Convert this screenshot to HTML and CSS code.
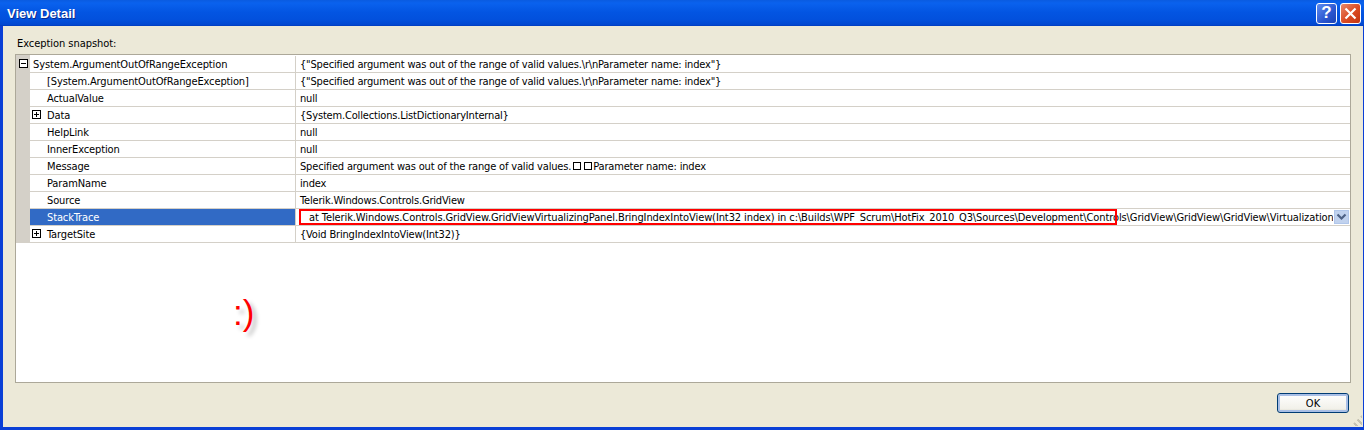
FILE: index.html
```html
<!DOCTYPE html>
<html lang="en">
<head>
<meta charset="utf-8">
<title>View Detail</title>
<link rel="stylesheet" href="styles.css">
</head>
<body>
<div class="window">
  <header class="titlebar">
    <span class="title">View Detail</span>
    <div class="caption-buttons">
      <span class="cap-btn help">?</span>
      <span class="cap-btn close"><svg width="13" height="13" viewBox="0 0 13 13"><path d="M1.5 1.5L11.5 11.5M11.5 1.5L1.5 11.5" stroke="#fff" stroke-width="2.2" fill="none"/></svg></span>
    </div>
  </header>
  <main class="client">
    <div class="caption">Exception snapshot:</div>
    <section class="panel">
      <div class="grid">
        <div class="row">
          <div class="gutter"><svg class="exp" width="9" height="9" viewBox="0 0 9 9"><path d="M.5.5h8v8h-8zM2 4.5h5" stroke="#000" fill="#fff" shape-rendering="crispEdges"/></svg></div>
          <div class="name root">System.ArgumentOutOfRangeException</div>
          <div class="value">{"Specified argument was out of the range of valid values.\r\nParameter name: index"}</div>
        </div>
        <div class="row">
          <div class="gutter"></div>
          <div class="name">[System.ArgumentOutOfRangeException]</div>
          <div class="value">{"Specified argument was out of the range of valid values.\r\nParameter name: index"}</div>
        </div>
        <div class="row">
          <div class="gutter"></div>
          <div class="name">ActualValue</div>
          <div class="value">null</div>
        </div>
        <div class="row">
          <div class="gutter"></div>
          <div class="name"><svg class="exp child" width="9" height="9" viewBox="0 0 9 9"><path d="M.5.5h8v8h-8zM2 4.5h5M4.5 2v5" stroke="#000" fill="#fff" shape-rendering="crispEdges"/></svg>Data</div>
          <div class="value">{System.Collections.ListDictionaryInternal}</div>
        </div>
        <div class="row">
          <div class="gutter"></div>
          <div class="name">HelpLink</div>
          <div class="value">null</div>
        </div>
        <div class="row">
          <div class="gutter"></div>
          <div class="name">InnerException</div>
          <div class="value">null</div>
        </div>
        <div class="row">
          <div class="gutter"></div>
          <div class="name">Message</div>
          <div class="value">Specified argument was out of the range of valid values.<span class="tofu"></span><span class="tofu"></span>Parameter name: index</div>
        </div>
        <div class="row">
          <div class="gutter"></div>
          <div class="name">ParamName</div>
          <div class="value">index</div>
        </div>
        <div class="row">
          <div class="gutter"></div>
          <div class="name">Source</div>
          <div class="value">Telerik.Windows.Controls.GridView</div>
        </div>
        <div class="row selected">
          <div class="gutter"></div>
          <div class="name">StackTrace</div>
          <div class="value trace">
            <span class="trace-text">&nbsp;&nbsp;at Telerik.Windows.Controls.GridView.GridViewVirtualizingPanel.BringIndexIntoView(Int32 index) in c:\Builds\WPF_Scrum\HotFix_2010_Q3\Sources\Development\Controls\GridView\GridView\GridView\Virtualization\GridViewVirtualizingPanel.cs</span>
            <span class="drop"><svg width="11" height="8" viewBox="0 0 11 8"><path d="M1.5 1.5L5.5 5.5L9.5 1.5" stroke="#4d6185" stroke-width="2.2" fill="none"/></svg></span>
            <span class="redbox"></span>
          </div>
        </div>
        <div class="row">
          <div class="gutter"></div>
          <div class="name"><svg class="exp child" width="9" height="9" viewBox="0 0 9 9"><path d="M.5.5h8v8h-8zM2 4.5h5M4.5 2v5" stroke="#000" fill="#fff" shape-rendering="crispEdges"/></svg>TargetSite</div>
          <div class="value">{Void BringIndexIntoView(Int32)}</div>
        </div>
      </div>
      <span class="smiley">:)</span>
    </section>
    <footer class="footer">
      <button class="ok" type="button">OK</button>
    </footer>
    <span class="grip"></span>
  </main>
</div>
</body>
</html>
```
FILE: styles.css
```css
* { box-sizing: border-box; }
html, body { margin: 0; padding: 0; }
body {
  width: 1364px;
  height: 430px;
  overflow: hidden;
  font-family: "DejaVu Sans Condensed", "DejaVu Sans", sans-serif;
  font-stretch: condensed;
  font-size: 11px;
  color: #000;
}
.window {
  width: 1364px;
  height: 430px;
  display: flex;
  flex-direction: column;
  background: #0a3fd6;
  padding: 0 1px 3px 0;
}
.titlebar {
  height: 26px;
  margin-right: -1px;
  flex: none;
  display: flex;
  align-items: center;
  justify-content: space-between;
  padding: 0 3px 0 7px;
  background: linear-gradient(#0a5be0 0, #0a62ee 3px, #0355e2 12px, #0250dc 20px, #0247cf 25px, #0039b8 26px);
}
.title {
  font-family: "Liberation Sans", sans-serif;
  font-weight: bold;
  font-size: 13px;
  color: #fff;
  text-shadow: 1px 1px 0 #0a2c90;
}
.caption-buttons { display: flex; gap: 3px; }
.cap-btn {
  width: 21px;
  height: 21px;
  border: 1px solid #fff;
  border-radius: 3px;
  display: flex;
  align-items: center;
  justify-content: center;
  color: #fff;
}
.help {
  background: linear-gradient(135deg, #5f8df0, #2a56d0 60%, #1c43b4);
  font: bold 17px "Liberation Sans", sans-serif;
}
.close { background: linear-gradient(135deg, #e8896a, #da4a22 55%, #c23410); }
.client {
  flex: 1;
  margin-left: 3px;
  min-height: 0;
  background: #ece9d8;
  display: flex;
  flex-direction: column;
  padding: 0 12px 0 12px;
  position: relative;
}
.caption {
  height: 28px;
  padding: 11px 0 0 2px;
  line-height: 13px;
  flex: none;
  letter-spacing: -0.05px;
}
.panel {
  flex: 1;
  min-height: 0;
  background: #fff;
  border: 1px solid #aca899;
  position: relative;
}
.grid {
  padding-top: 1px;
  background: linear-gradient(90deg, #d4d0c8 14px, #fff 14px);
}
.row {
  height: 17px;
  display: grid;
  grid-template-columns: 14px 266px 1fr;
  line-height: 14px;
  background: #fff;
}
.gutter {
  background: #d4d0c8;
  display: flex;
  align-items: flex-start;
  padding: 3px 0 0 3px;
}
.exp { display: block; flex: none; }
.child { position: absolute; left: 16px; margin-top: 1px; }
.name {
  padding: 2px 0 0 17px;
  border-bottom: 1px solid #d4d0c8;
  border-right: 1px solid #d4d0c8;
  white-space: nowrap;
  letter-spacing: -0.12px;
}
.name.root { padding-left: 3px; }
.value {
  padding: 2px 0 0 4px;
  border-bottom: 1px solid #d4d0c8;
  white-space: nowrap;
  overflow: hidden;
  letter-spacing: -0.17px;
}
.tofu {
  display: inline-block;
  width: 8px;
  height: 8px;
  border: 1px solid #000;
  margin: 0 1px 0 2px;
}
.selected .name {
  background: #316ac5;
  color: #fff;
}
.trace {
  position: relative;
  overflow: visible;
}
.trace-text {
  display: block;
  width: 1033px;
  padding-left: 3px;
  overflow: hidden;
  letter-spacing: -0.1px;
}
.drop {
  position: absolute;
  right: 1px;
  top: 1px;
  width: 15px;
  height: 14px;
  background: #c1d2ee;
  border: 1px solid #b0c6ea;
  display: flex;
  align-items: center;
  justify-content: center;
}
.redbox {
  position: absolute;
  left: 3px;
  top: 0;
  width: 818px;
  height: 16px;
  border: 2px solid #f00;
}
.smiley {
  position: absolute;
  left: 217px;
  top: 238px;
  font: 35px/40px "Liberation Sans", sans-serif;
  color: #f00;
  text-shadow: 4px 4px 4px #bbb;
}
.footer {
  height: 44px;
  flex: none;
  display: flex;
  justify-content: flex-end;
  align-items: flex-start;
  padding: 10px 2px 0 0;
}
.ok {
  width: 72px;
  height: 20px;
  padding: 1px 0 0;
  font: 11px "DejaVu Sans Condensed", "DejaVu Sans", sans-serif;
  font-stretch: condensed;
  color: #000;
  border: 1px solid #003c74;
  border-radius: 3px;
  background: linear-gradient(#fff, #f2f1ea 80%, #dcd9cd);
  box-shadow: inset 0 0 0 2px #a9bfe6;
}
.grip {
  position: absolute;
  right: 1px;
  bottom: 1px;
  width: 11px;
  height: 11px;
  background: repeating-linear-gradient(45deg, transparent 0 3px, #c5c2b2 3px 5px);
  clip-path: polygon(100% 0, 100% 100%, 0 100%);
}
```
